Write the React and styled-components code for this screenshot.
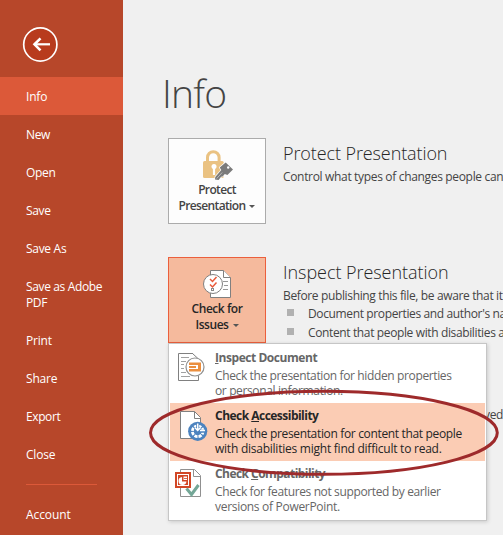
import React from "react";
import styled, { createGlobalStyle } from "styled-components";

const GlobalStyle = createGlobalStyle`
  * { box-sizing: border-box; }
  body { margin: 0; overflow: hidden; background: #f0f0f0; }
`;

const Screen = styled.div`
  position: relative;
  display: flex;
  width: 503px;
  height: 535px;
  overflow: hidden;
  background: #f0f0f0;
  color: #444;
  font-family: "Open Sans", "Noto Sans", sans-serif;
  font-size: 12px;
  line-height: 15px;
`;

const Sidebar = styled.nav`
  flex: none;
  width: 123px;
  height: 535px;
  background: #b7472a;
  color: #fff;
`;

const BackButton = styled.button`
  display: block;
  width: 36px;
  height: 36px;
  margin: 27px 0 14px 22px;
  padding: 0;
  border: 0;
  background: none;
`;

const NavItem = styled.div`
  display: flex;
  align-items: center;
  height: ${(p) => (p.$tall ? 54 : 38)}px;
  padding: 2px 0 0 26px;
  line-height: 16px;
  letter-spacing: ${(p) => p.$track || 0}px;
  white-space: pre;
  background: ${(p) => (p.$active ? "#dc5939" : "transparent")};
`;

const Divider = styled.hr`
  width: 71px;
  height: 1px;
  margin: 11px 0 10px 26px;
  border: 0;
  background: #dc5939;
`;

const Main = styled.main`
  flex: none;
  width: 380px;
  padding: 64px 0 0 45px;
`;

const PageTitle = styled.h1`
  height: 74px;
  margin: 0 0 0 -6px;
  font-size: 39px;
  line-height: 58px;
  font-weight: 300;
  letter-spacing: ${(p) => p.$track}px;
`;

const Section = styled.section`
  display: flex;
  gap: 17px;
  height: 119px;
`;

const TileButton = styled.button`
  flex: none;
  display: flex;
  flex-direction: column;
  align-items: center;
  width: 98px;
  height: 86px;
  padding: 9px 0 0;
  border: 1px solid ${(p) => (p.$active ? "#eb5f3c" : "#ababab")};
  background: ${(p) => (p.$active ? "#f5ba9d" : "#fdfdfd")};
  color: ${(p) => (p.$active ? "#262626" : "#444")};
  font: 600 12px/16px "Open Sans", "Noto Sans", sans-serif;
  letter-spacing: ${(p) => p.$track}px;
`;

const TileIcon = styled.svg`
  flex: none;
  width: 32px;
  height: 34px;
`;

const TileLine = styled.span`
  display: flex;
  align-items: center;
  gap: 3px;
  white-space: nowrap;
`;

const Caret = styled.i`
  margin-left: 1px;
  border: 3px solid transparent;
  border-top-color: #555;
  border-bottom: 0;
`;

const SectionBody = styled.div`
  flex: none;
  width: 300px;
  white-space: nowrap;
`;

const SectionTitle = styled.h2`
  margin: 3px 0 0;
  font-size: 18px;
  line-height: 24px;
  font-weight: 300;
  color: #262626;
  letter-spacing: ${(p) => p.$track}px;
`;

const BodyText = styled.p`
  margin: 4px 0 0;
  line-height: 16px;
  letter-spacing: ${(p) => p.$track}px;
`;

const Bullet = styled.div`
  display: flex;
  align-items: center;
  gap: 14px;
  height: 19px;
  padding-left: 4px;
  letter-spacing: ${(p) => p.$track}px;
  &::before {
    content: "";
    flex: none;
    width: 7px;
    height: 7px;
    margin-top: -2px;
    background: #b1b1b1;
  }
`;

const CoveredText = styled.p`
  margin: 65px 0 0 201px;
  letter-spacing: -0.35px;
`;

const Menu = styled.div`
  position: absolute;
  left: 168px;
  top: 343px;
  width: 319px;
  height: 178px;
  padding: 1px;
  border: 1px solid #c6c6c6;
  background: #fff;
  box-shadow: 1px 1px 4px rgba(0, 0, 0, 0.16);
`;

const MenuItem = styled.div`
  display: flex;
  gap: 5px;
  height: 58px;
  padding: 4px 0 0 5px;
  color: ${(p) => (p.$active ? "#262626" : "#666")};
  background: ${(p) => (p.$active ? "#fbccb4" : "transparent")};
`;

const MenuIcon = styled.svg`
  flex: none;
  width: 35px;
  height: 34px;
`;

const MenuCopy = styled.div`
  white-space: nowrap;
`;

const MenuTitle = styled.div`
  height: 19px;
  line-height: 17px;
  font-weight: 700;
  letter-spacing: ${(p) => p.$track}px;
`;

const MenuLine = styled.div`
  letter-spacing: ${(p) => p.$track}px;
`;

const Key = styled.span`
  text-decoration: underline;
  text-underline-offset: 1px;
`;

const Highlight = styled.svg`
  position: absolute;
  left: 146px;
  top: 386px;
  width: 357px;
  height: 94px;
`;

const nav = [
  { label: "Info", active: true, track: -0.2 },
  { label: "New", track: -0.35 },
  { label: "Open", track: -0.3 },
  { label: "Save", track: -0.35 },
  { label: "Save As", track: -0.3 },
  { label: "Save as Adobe\nPDF", tall: true, track: -0.36 },
  { label: "Print", track: -0.2 },
  { label: "Share", track: -0.2 },
  { label: "Export", track: -0.4 },
  { label: "Close", track: -0.2 },
];

function LockIcon() {
  return (
    <TileIcon viewBox="0 0 32 34">
      <path d="M6.500 14V9.500a5.800 5.800 0 0 1 11.600 0V14" fill="none" stroke="#eac282" strokeWidth="3" />
      <rect x="2" y="13" width="20.700" height="17" rx="1.500" fill="#eac282" />
      <circle cx="13" cy="18.500" r="2.500" fill="#fff" />
      <path d="M11.900 19h2.200v8h-2.200z" fill="#fff" />
      <path
        d="m14 31.500.3-2.600 6-6.800-1.600-2.700 6-4.900 7.400 7-5.700 5.400-2.600-.8-2.200 2.300-1.500.3-2.500 3.200z"
        fill="#7b7b7b"
        stroke="#fdfdfd"
        strokeWidth="1.400"
        paintOrder="stroke"
      />
      <circle cx="27.200" cy="19.500" r="1.200" fill="#fdfdfd" />
      <path d="m15.700 30.500 5.500-6" stroke="#d0d0d0" strokeWidth=".7" />
    </TileIcon>
  );
}

function IssuesIcon() {
  return (
    <TileIcon viewBox="0 0 32 34">
      <path d="M9.500 3.500h13l7 7v20h-20z" fill="#fff" stroke="#808080" />
      <path d="M22.500 3.500v7h7" fill="#fff" stroke="#808080" />
      <path d="M22 14.500h5M23 18.500h4M22 22.500h5" stroke="#999" />
      <circle cx="12" cy="17" r="9.500" fill="#fff" stroke="#808080" />
      <path d="m9 12 2.500 2.500 4-4.500M9 17.500l2.500 2.500 4-4.500" fill="none" stroke="#e8593a" strokeWidth="1.500" />
      <rect x="10.500" y="21.500" width="2" height="2" fill="none" stroke="#888" />
    </TileIcon>
  );
}

function InspectIcon() {
  return (
    <MenuIcon viewBox="0 0 35 34">
      <path d="M18 4.500H3.500v27h20V27M17.500 4.500l6 5.500" fill="none" stroke="#808080" />
      <path d="M6 8.500h8M6 12.500h5M6 15.500h3M6 19.500h3M6 23.500h5M6 27.500h9" stroke="#a0a0a0" />
      <circle cx="20" cy="18" r="9" fill="#fff" stroke="#909090" strokeWidth="1.200" />
      <path d="M14 13.500h12v9H14v-2.500h9v-4h-9z" fill="#eb8f3f" />
      <path d="M14 17h7v2h-7z" fill="#eb8f3f" />
    </MenuIcon>
  );
}

function AccessibilityIcon() {
  return (
    <MenuIcon viewBox="0 0 35 34">
      <path d="M5.500 4.500h14l6 6v21h-20z" fill="#fff" stroke="#808080" />
      <path d="M19.500 4.500v7h6" fill="none" stroke="#808080" />
      <circle cx="22.700" cy="24.300" r="9.600" fill="#4c83bf" />
      <circle cx="22.700" cy="24.300" r="5.300" fill="none" stroke="#fff" strokeWidth="2.800" strokeDasharray="3.100 1.060" />
      <path d="M22.700 17v6.500M20 21l2.700 2.700 2.700-2.700M24 24.300h6" fill="none" stroke="#4c83bf" strokeWidth="3" />
      <path d="M22.700 16.500v7M20 20.800l2.700 2.700 2.700-2.700M25 23.500h5" fill="none" stroke="#fff" strokeWidth="1.500" />
    </MenuIcon>
  );
}

function CompatibilityIcon() {
  return (
    <MenuIcon viewBox="0 0 35 34">
      <path d="M5.500 4.500h14l6 6v21h-20z" fill="#fff" stroke="#909090" />
      <path d="M18.500 4.500v7h7" fill="none" stroke="#909090" />
      <rect x="0" y="7" width="16" height="16" fill="#d24726" />
      <rect x="2.500" y="9.500" width="11" height="11" fill="#d24726" stroke="#fff" />
      <path d="M7 12v4.500h4.500A4 4 0 1 1 7 12z" fill="#fff" />
      <path d="M8.500 11.500h3.500v3.500H8.500z" fill="#fff" />
      <path d="M9 13.500h3" stroke="#d24726" strokeWidth=".8" />
      <path d="m11.500 23.500 5 6 7-9.500" fill="none" stroke="#74a797" strokeWidth="3" />
    </MenuIcon>
  );
}

export default function App() {
  return (
    <>
      <GlobalStyle />
      <Screen>
        <Sidebar>
          <BackButton aria-label="Back">
            <svg width="36" height="36" viewBox="0 0 36 36">
              <circle cx="18.300" cy="17.500" r="16.600" fill="#b83b1d" stroke="#fff" strokeWidth="1.700" />
              <path d="M28 17.300H12" stroke="#fff" strokeWidth="2.200" />
              <path d="m18.500 11.300-6 6 6 6" fill="none" stroke="#fff" strokeWidth="2.600" />
            </svg>
          </BackButton>
          {nav.map((n) => (
            <NavItem key={n.label} $active={n.active} $tall={n.tall} $track={n.track}>{n.label}</NavItem>
          ))}
          <Divider />
          <NavItem $track={-0.1}>Account</NavItem>
        </Sidebar>
        <Main>
          <PageTitle $track={-0.8}>Info</PageTitle>
          <Section>
            <TileButton $track={-0.65}>
              <LockIcon />
              <TileLine>Protect</TileLine>
              <TileLine>Presentation <Caret /></TileLine>
            </TileButton>
            <SectionBody>
              <SectionTitle $track={-0.1}>Protect Presentation</SectionTitle>
              <BodyText $track={-0.33}>Control what types of changes people can make to this presentation.</BodyText>
            </SectionBody>
          </Section>
          <Section>
            <TileButton $active $track={-0.45}>
              <IssuesIcon />
              <TileLine>Check for</TileLine>
              <TileLine>Issues <Caret /></TileLine>
            </TileButton>
            <SectionBody>
              <SectionTitle $track={-0.05}>Inspect Presentation</SectionTitle>
              <BodyText $track={-0.36}>Before publishing this file, be aware that it contains:</BodyText>
              <Bullet $track={-0.37}>Document properties and author's name</Bullet>
              <Bullet $track={-0.37}>Content that people with disabilities are unable to read</Bullet>
              <CoveredText>ved</CoveredText>
            </SectionBody>
          </Section>
        </Main>
        <Menu>
          <MenuItem>
            <InspectIcon />
            <MenuCopy>
              <MenuTitle $track={-0.45}><Key>I</Key>nspect Document</MenuTitle>
              <MenuLine $track={-0.37}>Check the presentation for hidden properties</MenuLine>
              <MenuLine $track={-0.37}>or personal information.</MenuLine>
            </MenuCopy>
          </MenuItem>
          <MenuItem $active>
            <AccessibilityIcon />
            <MenuCopy>
              <MenuTitle $track={-0.52}>Check <Key>A</Key>ccessibility</MenuTitle>
              <MenuLine $track={-0.34}>Check the presentation for content that people</MenuLine>
              <MenuLine $track={-0.24}>with disabilities might find difficult to read.</MenuLine>
            </MenuCopy>
          </MenuItem>
          <MenuItem>
            <CompatibilityIcon />
            <MenuCopy>
              <MenuTitle $track={-0.55}>Check <Key>C</Key>ompatibility</MenuTitle>
              <MenuLine $track={-0.37}>Check for features not supported by earlier</MenuLine>
              <MenuLine $track={-0.3}>versions of PowerPoint.</MenuLine>
            </MenuCopy>
          </MenuItem>
        </Menu>
        <Highlight viewBox="146 386 357 94">
          <ellipse cx="323.900" cy="432.800" rx="173.400" ry="41.500" fill="none" stroke="#9e2a2b" strokeWidth="3" />
        </Highlight>
      </Screen>
    </>
  );
}
